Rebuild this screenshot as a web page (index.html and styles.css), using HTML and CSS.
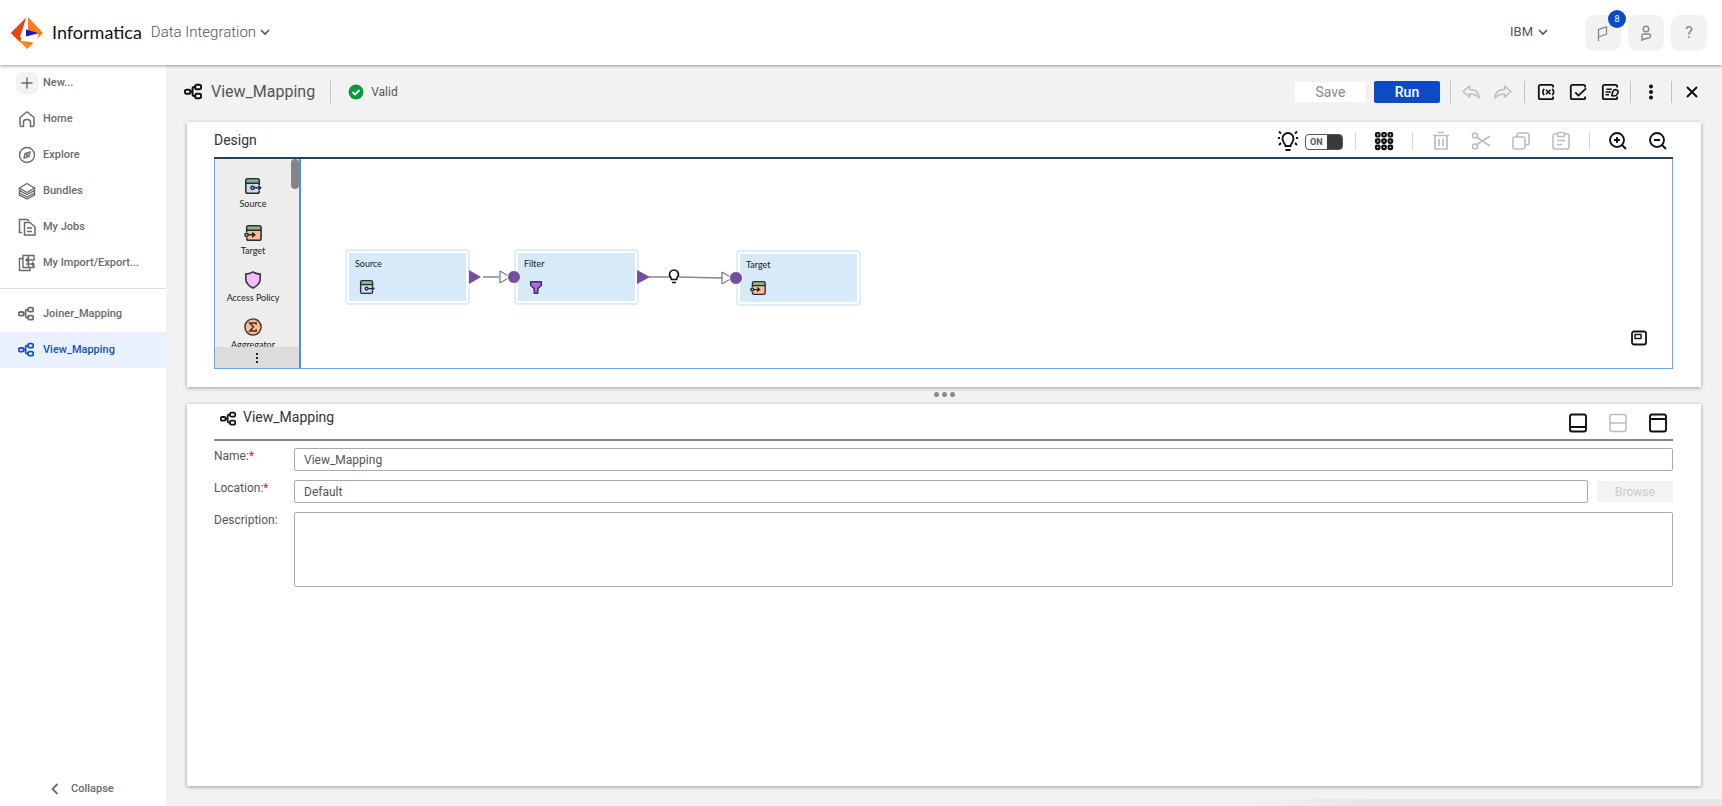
FILE: index.html
```html
<!DOCTYPE html>
<html lang="en">
<head>
<meta charset="utf-8">
<title>View_Mapping - Data Integration</title>
<link rel="stylesheet" href="styles.css">
</head>
<body>
<svg class="sprite" aria-hidden="true">
  <symbol id="mapping" viewBox="0 0 20 20"><g fill="none" stroke="currentColor" stroke-width="2.200"><rect x="1" y="7.500" width="6" height="4.500" rx="1.800"/><rect x="12.500" y="2" width="6.500" height="5" rx="1.800"/><rect x="12.500" y="12" width="6.500" height="5" rx="1.800"/><path d="M7 9.500H9.500M13 4.500H11q-1.500 0-1.500 2v6q0 2 1.500 2h2"/></g></symbol>
  <symbol id="chevron" viewBox="0 0 10 10"><path d="M1 3l4 4 4-4" fill="none" stroke="currentColor" stroke-width="1.600"/></symbol>
  <symbol id="source" viewBox="0 0 20 20"><rect x="2" y="2" width="15" height="16" rx="2" fill="#c9d9f7"/><path d="M2 3h15v4H2z" fill="#7fb98a"/><g fill="none" stroke="#262b33" stroke-width="1.700"><path d="M17 9V4q0-2-2-2H4Q2 2 2 4v12q0 2 2 2h11q2 0 2-2v-1M2 7h15"/><circle cx="9.500" cy="12" r="1.800"/><path d="M11.500 12H19M16 9.500l2.500 2.500-2.500 2.500"/></g></symbol>
  <symbol id="target" viewBox="0 0 20 20"><rect x="3" y="2" width="16" height="16" rx="2" fill="#fdbb93"/><path d="M4 3h15v4H4z" fill="#7fb98a"/><g fill="none" stroke="#262b33" stroke-width="1.700"><path d="M3 9V4q0-2 2-2h12q2 0 2 2v12q0 2-2 2H5q-2 0-2-2v-1M3 7h16"/><circle cx="2.800" cy="12" r="1.800"/><path d="M4.500 12H12M9 9.500l3 2.500-3 2.500"/></g></symbol>
  <symbol id="doc" viewBox="0 0 20 20"><path d="M18 5V4q0-2-2-2H4Q2 2 2 4v12q0 2 2 2h12q2 0 2-2v-1" fill="none" stroke="currentColor" stroke-width="2"/></symbol>
</svg>

<header class="topbar">
  <svg class="logo" viewBox="0 0 32 32" aria-hidden="true"><path d="M16 0L0 16l9 9 3-8z" fill="#f0521d"/><path d="M15 1L0 16l9 9z" fill="#e8450f"/><path d="M17 0l15 16-6 6-9-3z" fill="#ff7d12"/><path d="M8 23.500l15 2L16 32z" fill="#ff8a10"/><path d="M15.500 0h1.500v11l-2 1v7l13-2-2 5-1 2-6-2 4 4-14-6z" fill="#fff"/><path d="M15 12.500l12 3.500-12 3.500z" fill="#1715d6"/></svg>
  <span class="brand">Informatica</span>
  <button class="product">Data Integration <svg class="i10"><use href="#chevron"/></svg></button>
  <button class="org">IBM <svg class="i10"><use href="#chevron"/></svg></button>
  <div class="top-actions">
    <button class="tile" aria-label="Notifications"><svg class="i18" viewBox="0 0 18 18"><path d="M4.500 17V5.500l8-2.500v7l-8 3" fill="none" stroke="currentColor" stroke-width="1.300"/></svg><span class="badge">8</span></button>
    <button class="tile" aria-label="Account"><svg class="i18" viewBox="0 0 18 18"><g fill="none" stroke="currentColor" stroke-width="1.400"><circle cx="9" cy="5" r="2.800"/><path d="M5 15V11.500q0-1.500 1.500-1.500H12q1.500 0 1.500 1.500T12 14q-4 .5-7 2z"/></g></svg></button>
    <button class="tile" aria-label="Help">?</button>
  </div>
</header>

<div class="shell">
  <nav class="sidebar">
    <a class="nav" href="#"><span class="plus"><svg class="i18" viewBox="0 0 18 18"><path d="M9 3.500v11M3.500 9h11" stroke="currentColor" stroke-width="1.400"/></svg></span>New...</a>
    <a class="nav" href="#"><svg class="i18" viewBox="0 0 18 18"><path d="M2 7.500L8 2.500q1-.8 2 0l6 5V15q0 1.500-1.500 1.500h-2V12q0-2.500-3.500-2.500T5.500 12v4.500h-2Q2 16.500 2 15z" fill="none" stroke="currentColor" stroke-width="1.500" stroke-linejoin="round"/></svg>Home</a>
    <a class="nav" href="#"><svg class="i18" viewBox="0 0 18 18"><g fill="none" stroke="currentColor" stroke-width="1.400"><circle cx="9" cy="9" r="7.500"/><path d="M12 6l-1 4.500L6 12l1-4.500z"/><circle cx="9" cy="9" r=".6"/></g></svg>Explore</a>
    <a class="nav" href="#"><svg class="i18" viewBox="0 0 18 18"><path d="M9 1.500L1.500 6 9 10.500 16.500 6z" fill="none" stroke="currentColor" stroke-width="1.400"/><path d="M1.500 6v7L9 17l7.500-4V6M1.500 8.500L9 12.500l7.500-4M1.500 11L9 15l7.500-4" fill="none" stroke="currentColor" stroke-width="1.400"/></svg>Bundles</a>
    <a class="nav" href="#"><svg class="i18" viewBox="0 0 18 18"><path d="M6.500 4.500H12l5 4.500v8H6.500zM9 10h5M9 13.500h5M4 14.500H1.500V1.500h8L11 3" fill="none" stroke="currentColor" stroke-width="1.500"/></svg>My Jobs</a>
    <a class="nav" href="#"><svg class="i18" viewBox="0 0 18 18"><path d="M16 5V1.500H5v12h11V11M5 4.500H1.500v12H12V14M8 6h9M10 4L8 6l2 2M8 10h8M14 8l2 2-2 2M10.500 2v11" fill="none" stroke="currentColor" stroke-width="1.400"/></svg>My Import/Export...</a>
    <hr>
    <a class="nav" href="#"><svg class="i16"><use href="#mapping"/></svg>Joiner_Mapping</a>
    <a class="nav current" href="#" aria-current="page"><svg class="i16"><use href="#mapping"/></svg>View_Mapping</a>
    <button class="collapse"><svg class="i12" viewBox="0 0 12 12"><path d="M8.500 1L3.500 6l5 5" fill="none" stroke="currentColor" stroke-width="1.800"/></svg>Collapse</button>
  </nav>

  <main class="main">
    <div class="toolbar">
      <svg class="i18 ink"><use href="#mapping"/></svg>
      <h1>View_Mapping</h1>
      <span class="rule"></span>
      <svg class="i16" viewBox="0 0 16 16" aria-hidden="true"><circle cx="8" cy="8" r="7.500" fill="#0a9a3c"/><path d="M4.500 8l2.500 2.500L11.500 6" fill="none" stroke="#fff" stroke-width="1.800"/></svg>
      <span class="valid">Valid</span>
      <div class="tools">
        <button class="btn save">Save</button>
        <button class="btn run">Run</button>
        <span class="rule"></span>
        <button class="tool off" aria-label="Undo"><svg class="i20" viewBox="0 0 20 20"><path d="M2 9.500L8.500 4v3.500c6 0 9.500 2.500 9.500 8.500-2-3-5-4-9.500-4v3z" fill="none" stroke="currentColor" stroke-width="1.500" stroke-linejoin="round"/></svg></button>
        <button class="tool off" aria-label="Redo"><svg class="i20" viewBox="0 0 20 20"><path d="M18 9.500L11.500 4v3.500c-6 0-9.500 2.500-9.500 8.500 2-3 5-4 9.500-4v3z" fill="none" stroke="currentColor" stroke-width="1.500" stroke-linejoin="round"/></svg></button>
        <span class="rule spaced"></span>
        <button class="tool" aria-label="Parameters"><svg class="i18" viewBox="0 0 20 20"><use href="#doc"/><path d="M8 6.500q-3 3.500 0 7M17 6.500q3 3.500 0 7M10 7.500l5 5M15 7.500l-5 5" fill="none" stroke="currentColor" stroke-width="1.800"/></svg></button>
        <button class="tool" aria-label="Validate"><svg class="i18" viewBox="0 0 20 20"><use href="#doc"/><path d="M7 10.500l3.500 3.500L19 6" fill="none" stroke="currentColor" stroke-width="2"/></svg></button>
        <button class="tool" aria-label="Logs"><svg class="i18" viewBox="0 0 20 20"><use href="#doc"/><path d="M6 7h6M5 10h6M5 13h4M12 14l1-4q1-3 4-2.500 3 1 1.500 4-1.500 3-4 3z" fill="none" stroke="currentColor" stroke-width="1.800"/></svg></button>
        <span class="rule"></span>
        <button class="tool" aria-label="More"><svg class="i18" viewBox="0 0 18 18"><g fill="currentColor"><circle cx="9" cy="3.500" r="2"/><circle cx="9" cy="9" r="2"/><circle cx="9" cy="14.500" r="2"/></g></svg></button>
        <span class="rule"></span>
        <button class="tool" aria-label="Close"><svg class="i14" viewBox="0 0 14 14"><path d="M2 2l10 10M12 2L2 12" stroke="currentColor" stroke-width="2"/></svg></button>
      </div>
    </div>

    <section class="panel design">
      <div class="design-head">
        <h2>Design</h2>
        <div class="tools">
          <svg class="i20 ink" viewBox="0 0 20 20" aria-hidden="true"><path d="M7.500 15c0-2-3-3.500-3-7.500a5.500 5.500 0 0 1 11 0c0 4-3 5.500-3 7.500zM7.500 19h5M1 .5L3 2.500M19 .5l-2 2M0 7h2M20 7h-2M1 14l2-2M19 14l-2-2" fill="none" stroke="currentColor" stroke-width="1.900"/></svg>
          <button class="switch" role="switch" aria-checked="true" aria-label="Recommendations"><span>ON</span></button>
          <span class="rule light"></span>
          <button class="wide" aria-label="Arrange"><svg class="i20" viewBox="0 0 20 20"><g fill="none" stroke="currentColor" stroke-width="2.200"><rect x="2" y="2" width="3.500" height="3.500" rx="1"/><rect x="8.300" y="2" width="3.500" height="3.500" rx="1"/><rect x="14.600" y="2" width="3.500" height="3.500" rx="1"/><rect x="2" y="8.300" width="3.500" height="3.500" rx="1"/><rect x="8.300" y="8.300" width="3.500" height="3.500" rx="1"/><rect x="14.600" y="8.300" width="3.500" height="3.500" rx="1"/><rect x="2" y="14.600" width="3.500" height="3.500" rx="1"/><rect x="8.300" y="14.600" width="3.500" height="3.500" rx="1"/><rect x="14.600" y="14.600" width="3.500" height="3.500" rx="1"/></g></svg></button>
          <span class="rule light"></span>
          <button class="wide off" aria-label="Delete"><svg class="i20" viewBox="0 0 20 20"><path d="M2 4.500h16M7 1.500h6M4 5v13h12V5M8 8v7M12 8v7" fill="none" stroke="currentColor" stroke-width="1.700"/></svg></button>
          <button class="wide off" aria-label="Cut"><svg class="i20" viewBox="0 0 20 20"><g fill="none" stroke="currentColor" stroke-width="1.600"><circle cx="4" cy="4.500" r="2.500"/><circle cx="4" cy="15.500" r="2.500"/><path d="M6 6.500L19 15M6 13.500L19 5"/></g></svg></button>
          <button class="wide off" aria-label="Copy"><svg class="i20" viewBox="0 0 20 20"><g fill="none" stroke="currentColor" stroke-width="1.600"><rect x="2" y="6" width="12" height="12" rx="2"/><path d="M6 6V4q0-2 2-2h8q2 0 2 2v8q0 2-2 2h-2"/></g></svg></button>
          <button class="wide off" aria-label="Paste"><svg class="i20" viewBox="0 0 20 20"><g fill="none" stroke="currentColor" stroke-width="1.600"><path d="M6 3H4Q2 3 2 5v11q0 2 2 2h12q2 0 2-2V5q0-2-2-2h-2"/><rect x="6.500" y="1.500" width="7" height="4" rx="1"/><path d="M6 9.500h8M6 13.500h5"/></g></svg></button>
          <span class="rule light"></span>
          <button class="wide" aria-label="Zoom in"><svg class="i20" viewBox="0 0 20 20"><g fill="none" stroke="currentColor" stroke-width="1.900"><circle cx="9" cy="9" r="7"/><path d="M14 14l4 4M9 6v6M6 9h6"/></g></svg></button>
          <button class="wide" aria-label="Zoom out"><svg class="i20" viewBox="0 0 20 20"><g fill="none" stroke="currentColor" stroke-width="1.900"><circle cx="9" cy="9" r="7"/><path d="M14 14l4 4M6 9h6"/></g></svg></button>
        </div>
      </div>
      <div class="workspace">
        <div class="palette">
          <ul>
            <li><svg class="i18"><use href="#source"/></svg>Source</li>
            <li><svg class="i18"><use href="#target"/></svg>Target</li>
            <li><svg class="i18" viewBox="0 0 20 20"><path d="M10 1q4 2.500 8 2.500V9q0 6-8 10-8-4-8-10V3.500Q6 3.500 10 1z" fill="#f1bdfb" stroke="#3b3440" stroke-width="1.800"/></svg>Access Policy</li>
            <li><svg class="i18" viewBox="0 0 20 20"><circle cx="10" cy="10" r="9" fill="#fdbb93" stroke="#3a3030" stroke-width="1.600"/><path d="M13.500 7.500V5.500H6.500l4 4.500-4 4.500h7v-2" fill="none" stroke="#3a3030" stroke-width="1.700"/></svg>Aggregator</li>
          </ul>
          <span class="thumb"></span>
          <button class="more" aria-label="More transformations"><svg class="i12" viewBox="0 0 12 12"><path d="M5 1h2v2H5zM5 5h2v2H5zM5 9h2v2H5z" fill="currentColor"/></svg></button>
        </div>
        <div class="canvas">
          <div class="node n1"><span>Source</span><svg class="i16"><use href="#source"/></svg></div>
          <div class="node n2"><span>Filter</span><svg class="i16" viewBox="0 0 18 18"><path d="M3 3h12v4l-4 4v5H7v-5L3 7z" fill="#a86bf2" stroke="#40364e" stroke-width="1.700" stroke-linejoin="round"/></svg></div>
          <div class="node n3"><span>Target</span><svg class="i16"><use href="#target"/></svg></div>
          <svg class="links" viewBox="0 0 560 120" aria-hidden="true">
            <path d="M182 48h16M348 48h23M378 48l43 1" stroke="#888" stroke-width="1.500"/>
            <g fill="#fff" stroke="#555"><path d="M199 42l10 6-10 6zM421 43l10 6-10 6z"/></g>
            <g fill="#734f9f"><path d="M168 41l12 7-12 7zM336 41l13 7-13 7z"/></g>
            <g fill="#734f9f" stroke="#fff" stroke-width="1"><circle cx="213" cy="48" r="6.500"/><circle cx="435" cy="49" r="6.500"/></g>
            <path d="M370.500 50.500c0-2-2-2.500-2-5a4.500 4.500 0 0 1 9 0c0 2.500-2 3-2 5zM371 53.500h4" fill="#fff" stroke="#111" stroke-width="1.700"/>
          </svg>
          <button class="overview" aria-label="Overview"><svg class="i18" viewBox="0 0 18 18"><rect x="2" y="2.500" width="14" height="13" rx="2" fill="none" stroke="currentColor" stroke-width="1.800"/><rect x="5" y="5.500" width="6" height="4" fill="none" stroke="currentColor" stroke-width="1.400"/></svg></button>
        </div>
      </div>
    </section>

    <div class="splitter"><i></i><i></i><i></i></div>

    <section class="panel details">
      <div class="details-head">
        <svg class="i16 ink"><use href="#mapping"/></svg>
        <h2>View_Mapping</h2>
        <div class="tools">
          <button class="wide" aria-label="Minimize"><svg class="i20" viewBox="0 0 20 20"><path d="M4 1.500h12q2 0 2 2v13q0 2-2 2H4q-2 0-2-2v-13q0-2 2-2zM2 14h16" fill="none" stroke="currentColor" stroke-width="1.900"/></svg></button>
          <button class="wide off" aria-label="Split"><svg class="i20" viewBox="0 0 20 20"><path d="M4 1.500h12q2 0 2 2v13q0 2-2 2H4q-2 0-2-2v-13q0-2 2-2zM2 10h16" fill="none" stroke="currentColor" stroke-width="1.500"/></svg></button>
          <button class="wide" aria-label="Maximize"><svg class="i20" viewBox="0 0 20 20"><path d="M4 1.500h12q2 0 2 2v13q0 2-2 2H4q-2 0-2-2v-13q0-2 2-2zM2 6h16" fill="none" stroke="currentColor" stroke-width="1.900"/></svg></button>
        </div>
      </div>
      <form class="form">
        <label for="name">Name:<b>*</b></label>
        <input id="name" type="text" value="View_Mapping">
        <label for="location">Location:<b>*</b></label>
        <div class="pair"><input id="location" type="text" value="Default"><button type="button" class="browse" disabled>Browse</button></div>
        <label for="description">Description:</label>
        <textarea id="description"></textarea>
      </form>
    </section>
    <div class="strip"></div>
  </main>
</div>
</body>
</html>
```

FILE: styles.css
```css
* { box-sizing: border-box; }
html, body { height: 100%; }
body { margin: 0; display: flex; flex-direction: column; font: 12px/16px Roboto, "Liberation Sans", sans-serif; color: #555; background: #fff; overflow: hidden; }
button { font: inherit; color: inherit; border: 0; padding: 0; background: none; display: flex; align-items: center; justify-content: center; }
h1, h2, ul { margin: 0; padding: 0; font-weight: 400; }
svg { flex: none; display: block; }
.sprite { width: 0; height: 0; position: absolute; }
.i10 { width: 10px; height: 10px; }
.i12 { width: 12px; height: 12px; }
.i14 { width: 14px; height: 14px; }
.i16 { width: 16px; height: 16px; }
.i18 { width: 18px; height: 18px; }
.i20 { width: 20px; height: 20px; }
.ink { color: #111; }
.off { color: #bdbdbd; }

.topbar { flex: none; height: 65px; display: flex; align-items: center; padding: 0 15px 0 11px; background: #fff; box-shadow: 0 1px 3px rgba(0, 0, 0, .4); position: relative; z-index: 1; }
.logo { width: 32px; height: 32px; }
.brand { margin: 0 9px 2px; font: 18px/24px Lato, sans-serif; color: #111; }
.product { gap: 4px; margin-bottom: 2px; font-size: 15px; font-weight: 300; color: #555; }
.org { margin: 0 0 1px auto; gap: 5px; font-size: 13px; }
.top-actions { display: flex; gap: 7px; margin-left: 37px; }
.tile { width: 36px; height: 36px; border-radius: 9px; background: #f2f2f2; color: #888; position: relative; font-size: 16px; }
.badge { position: absolute; top: -5px; right: -5px; width: 18px; height: 18px; border-radius: 9px; background: #0b4cc6; color: #fff; font-size: 9px; line-height: 18px; }

.shell { flex: 1; min-height: 0; display: flex; }
.sidebar { flex: none; width: 166px; display: flex; flex-direction: column; background: #fff; }
.nav { height: 36px; display: flex; align-items: center; gap: 7px; padding-left: 18px; color: #6a6a6a; font-size: 11px; font-weight: 500; text-decoration: none; white-space: nowrap; }
.nav .i16 { margin: 0 2px 0 0; }
.plus { width: 22px; height: 22px; margin: 0 -2px; border-radius: 6px; background: #f2f2f2; display: flex; align-items: center; justify-content: center; }
.sidebar hr { width: 100%; margin: 7px 0; border: 0; border-top: 1px solid #ddd; }
.current { background: #e9f1fe; color: #1c4fb5; }
.collapse { margin: auto auto 9px 49px; gap: 10px; color: #6a6a6a; font-size: 11px; font-weight: 500; }

.main { flex: 1; min-width: 0; display: flex; flex-direction: column; background: #f2f2f2; }
.toolbar { flex: none; height: 57px; display: flex; align-items: center; padding: 0 14px 4px 18px; }
.toolbar h1 { margin-left: 9px; font-size: 16px; line-height: 20px; }
.toolbar > .rule { margin: 0 17px 0 15px; }
.rule { width: 1px; height: 22px; background: #c4c4c4; margin: 0 4px; }
.spaced { margin: 0 5px; }
.light { height: 18px; background: #d8d8d8; margin: 0 8px; }
.valid { margin-left: 7px; }
.tools { display: flex; align-items: center; margin-left: auto; }
.tool { width: 32px; height: 24px; }
.wide { width: 40px; height: 24px; }
.tool:not(.off), .wide:not(.off) { color: #111; }
.btn { font-size: 14px; }
.save { width: 71px; height: 20px; margin-right: 8px; background: #fff; color: #888; }
.run { width: 66px; height: 22px; margin-right: 6px; border-radius: 2px; background: #0b4cc6; color: #fff; font-weight: 500; }

.panel { margin: 0 21px; padding: 0 28px 0 27px; background: #fff; box-shadow: 0 1px 4px rgba(0, 0, 0, .35); }
.design { flex: none; padding-bottom: 18px; }
.design-head { height: 37px; display: flex; align-items: center; border-bottom: 2px solid #24405c; }
.panel h2 { font-size: 14px; line-height: 18px; color: #333; }
.design-head .tools, .details-head .tools { margin: 2px -5px 0 auto; }
.switch { width: 38px; height: 16px; margin: 2px 4px 0 7px; border: 1px solid #555; border-radius: 4px; background: linear-gradient(90deg, #fff 58%, #3a3a3a 58%); justify-content: flex-start; padding-left: 4px; font-size: 9px; font-weight: 700; }
.workspace { height: 210px; display: flex; border: 1px solid #64a8e4; border-top: 0; }
.palette { flex: none; width: 86px; display: flex; flex-direction: column; background: #ededed; border-right: 2px solid #4a93dc; position: relative; font: 9px/12px Lato, sans-serif; color: #222; }
.palette ul { flex: 1; min-height: 0; overflow: hidden; list-style: none; padding: 18px 8px 0 0; }
.palette li { display: flex; flex-direction: column; align-items: center; gap: 3px; margin-bottom: 14px; white-space: nowrap; }
.more { flex: none; height: 21px; background: #dcdcdc; }
.thumb { position: absolute; top: 0; right: 0; width: 8px; height: 30px; border-radius: 4px; background: #858585; }
.canvas { flex: 1; position: relative; overflow: hidden; }
.node { position: absolute; width: 125px; height: 56px; padding: 6px 8px; display: flex; flex-direction: column; align-items: flex-start; gap: 8px; border: 2px solid #e0eef9; border-radius: 4px; background: #d6eafa; box-shadow: inset 0 0 0 2px #fff; font: 9px/14px Lato, sans-serif; color: #222; }
.node svg { margin-left: 4px; }
.n1 { left: 44px; top: 90px; }
.n2 { left: 213px; top: 90px; }
.n3 { left: 435px; top: 91px; }
.links { position: absolute; left: 0; top: 70px; width: 560px; height: 120px; }
.overview { position: absolute; right: 24px; bottom: 21px; color: #111; }

.splitter { flex: none; height: 17px; padding-bottom: 2px; display: flex; align-items: center; justify-content: center; gap: 3px; }
.splitter i { width: 5px; height: 5px; border-radius: 3px; background: #8a8a8a; }

.details { flex: 1; min-height: 0; }
.details-head { height: 37px; display: flex; align-items: center; padding-left: 6px; border-bottom: 2px solid #888; }
.details-head > svg { margin-bottom: 6px; }
.details-head h2 { margin: 0 0 10px 7px; }
.form { display: grid; grid-template-columns: 80px 1fr; row-gap: 9px; padding-top: 7px; }
.form b { color: #d22; font-weight: 400; }
.form input, .form textarea { width: 100%; min-width: 0; height: 23px; margin: 0; padding: 0 9px; border: 1px solid #aaa; border-radius: 2px; background: #fff; font: inherit; color: #555; resize: none; }
.form textarea { height: 75px; }
.pair { display: flex; gap: 9px; }
.browse { flex: none; width: 76px; height: 21px; margin-top: 1px; background: #f3f3f3; color: #ccc; }
.strip { flex: none; height: 7px; margin: 13px 0 0 1074px; background: linear-gradient(90deg, #f2f2f2, #e6e6e6 130px); }
```
